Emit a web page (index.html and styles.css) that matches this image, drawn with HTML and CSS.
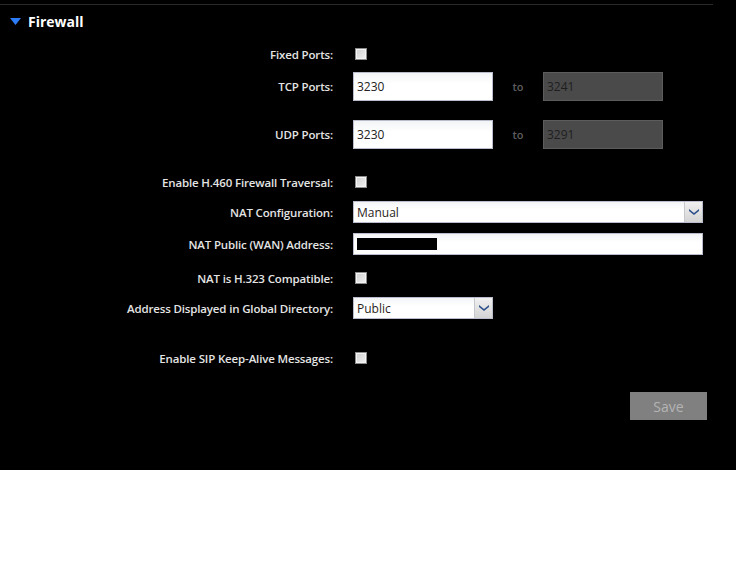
FILE: index.html
```html
<!DOCTYPE html>
<html lang="en">

<head>
    <meta charset="UTF-8">
    <title>Firewall</title>
    <link rel="stylesheet" href="styles.css">
</head>

<body>
    <div class="panel">
        <div class="top-rule"></div>

        <div class="section-head">
            <svg class="caret" width="11" height="7" viewBox="0 0 11 7"><path d="M0 0H11L5.5 7Z" fill="#2b7cf6"/></svg>
            <span class="section-title">Firewall</span>
        </div>

        <div class="form">
            <div class="row r-fixed">
                <label class="lbl">Fixed Ports:</label>
                <span class="check"></span>
            </div>

            <div class="row r-tcp">
                <label class="lbl">TCP Ports:</label>
                <div class="field port">3230</div>
                <span class="to">to</span>
                <div class="field port-off">3241</div>
            </div>

            <div class="row r-udp">
                <label class="lbl">UDP Ports:</label>
                <div class="field port">3230</div>
                <span class="to">to</span>
                <div class="field port-off">3291</div>
            </div>

            <div class="row r-h460">
                <label class="lbl">Enable H.460 Firewall Traversal:</label>
                <span class="check"></span>
            </div>

            <div class="row r-natcfg">
                <label class="lbl">NAT Configuration:</label>
                <div class="select wide">
                    <span class="select-text">Manual</span>
                    <span class="select-btn"><svg width="10" height="6" viewBox="0 0 10 6"><path d="M0 0L5 4L10 0V2L5 6L0 2Z" fill="#2d4f8c"/></svg></span>
                </div>
            </div>

            <div class="row r-natpub">
                <label class="lbl">NAT Public (WAN) Address:</label>
                <div class="field slim wide"><span class="redact"></span></div>
            </div>

            <div class="row r-h323">
                <label class="lbl">NAT is H.323 Compatible:</label>
                <span class="check"></span>
            </div>

            <div class="row r-addr">
                <label class="lbl">Address Displayed in Global Directory:</label>
                <div class="select short">
                    <span class="select-text">Public</span>
                    <span class="select-btn"><svg width="10" height="6" viewBox="0 0 10 6"><path d="M0 0L5 4L10 0V2L5 6L0 2Z" fill="#2d4f8c"/></svg></span>
                </div>
            </div>

            <div class="row r-sip">
                <label class="lbl">Enable SIP Keep-Alive Messages:</label>
                <span class="check"></span>
            </div>

            <div class="actions">
                <button class="save-btn">Save</button>
            </div>
        </div>
    </div>
</body>

</html>
```

FILE: styles.css
```css
* {
    margin: 0;
    padding: 0;
    box-sizing: border-box;
}

body {
    background: #fff;
    font-family: 'Open Sans', 'Noto Sans', sans-serif;
}

.panel {
    background: #000;
    height: 470px;
    padding-top: 4px;
}

.top-rule {
    width: 713px;
    height: 1px;
    background: #2a2a2a;
}

.section-head {
    display: flex;
    align-items: center;
    gap: 7px;
    height: 32px;
    padding-left: 10px;
}

.section-title {
    color: #fff;
    font-size: 14px;
    font-weight: 700;
}

.form {
    padding-top: 5px;
}

.row {
    display: flex;
    align-items: center;
    height: 24px;
}

.lbl {
    width: 333px;
    margin-right: 20px;
    text-align: right;
    color: #e4e4e4;
    font-size: 11.5px;
    font-weight: 600;
    letter-spacing: -0.15px;
}

.r-fixed { margin-top: 0; }
.r-tcp { margin-top: 6px; height: 29px; }
.r-udp { margin-top: 19px; height: 29px; }
.r-h460 { margin-top: 21px; }
.r-natcfg { margin-top: 7px; height: 22px; }
.r-natpub { margin-top: 10px; height: 22px; }
.r-h323 { margin-top: 11px; }
.r-addr { margin-top: 7px; height: 22px; }
.r-sip { margin-top: 27px; }

.check {
    width: 12px;
    height: 12px;
    margin-left: 2px;
    border: 1px solid #8c8c8c;
    background: linear-gradient(135deg, #cfcfcf 0%, #f2f2f2 100%);
    box-shadow: inset 0 0 0 1px #f4f4f4;
}

.field {
    height: 29px;
    display: flex;
    align-items: center;
    padding-left: 3px;
    font-size: 12px;
    color: #222;
    background: linear-gradient(#f2f4f6 0%, #fff 40%);
    border: 1px solid #b9bccb;
}

.port {
    width: 140px;
}

.port-off {
    width: 120px;
    background: #4a4a4a;
    border-color: #5c5c5c;
    color: #1e1e1e;
}

.to {
    width: 50px;
    text-align: center;
    color: #5e5e5e;
    font-size: 11px;
    font-weight: 600;
}

.slim {
    height: 22px;
}

.wide {
    width: 350px;
}

.short {
    width: 140px;
}

.redact {
    display: block;
    width: 80px;
    height: 12px;
    background: #000;
}

.select {
    height: 22px;
    display: flex;
    border: 1px solid #b9bccb;
    background: linear-gradient(#f2f4f6 0%, #fff 40%);
}

.select-text {
    flex: 1;
    display: flex;
    align-items: center;
    padding-left: 3px;
    font-size: 12px;
    color: #2a1e22;
}

.select-btn {
    width: 18px;
    display: flex;
    align-items: center;
    justify-content: center;
    border-left: 1px solid #c6c8d0;
    background: linear-gradient(#f0f0f0 0%, #d4d4d4 100%);
}

.actions {
    display: flex;
    justify-content: flex-end;
    width: 707px;
    margin-top: 22px;
}

.save-btn {
    width: 77px;
    height: 28px;
    border: none;
    background: #808080;
    color: #b4b4b4;
    font-family: 'Open Sans', 'Noto Sans', sans-serif;
    font-size: 14px;
}
```
